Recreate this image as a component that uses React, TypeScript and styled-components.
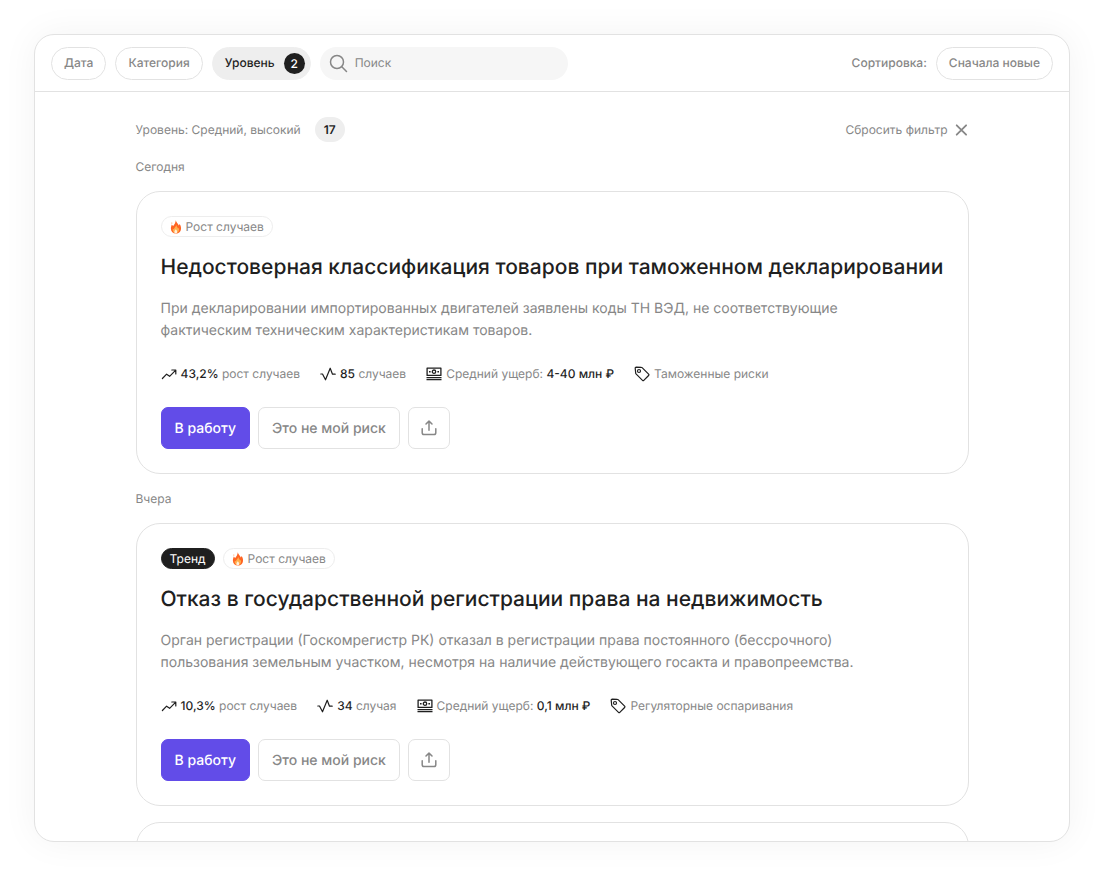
import React from "react";
import styled, { createGlobalStyle, css } from "styled-components";

const color = {
  ink: "#1f1f1f",
  muted: "#878787",
  line: "#e2e2e2",
  lineSoft: "#ededed",
  fill: "#eeeeee",
  field: "#f6f6f6",
  accent: "#624ce8",
};

const GlobalStyle = createGlobalStyle`
  *, *::before, *::after { box-sizing: border-box; }
  body { margin: 0; background: #fff; }
  body, button, input { font-family: Inter, "Liberation Sans", sans-serif; }
  body { text-rendering: geometricPrecision; }
  button, input { text-rendering: inherit; }
  h1, h2, p, ul { margin: 0; padding: 0; }
  svg { display: block; flex: none; }
`;

const Page = styled.div`
  height: 100vh;
  padding: 34px 34px 35px;
`;

const Panel = styled.div`
  display: flex;
  flex-direction: column;
  height: 100%;
  overflow: hidden;
  background: #fff;
  border: 1px solid ${color.line};
  border-radius: 20px;
  box-shadow: 0 0 36px rgba(0, 0, 0, 0.05);
`;

const Toolbar = styled.header`
  display: flex;
  flex: none;
  align-items: center;
  gap: 9px;
  height: 57px;
  padding: 0 16px;
  border-bottom: 1px solid ${color.line};
`;

const Pill = styled.button<{ $active?: boolean }>`
  display: flex;
  flex: none;
  align-items: center;
  gap: 9px;
  height: 33px;
  padding: 0 12px;
  border: 1px solid ${color.line};
  border-radius: 17px;
  background: #fff;
  color: ${color.muted};
  font-size: 12px;
  font-weight: 500;
  line-height: 16px;
  cursor: pointer;
  ${(p) =>
    p.$active &&
    css`
      padding: 0 5px 0 12px;
      border-color: ${color.fill};
      background: ${color.fill};
      color: ${color.ink};
    `}
`;

const PillCount = styled.span`
  width: 21px;
  height: 21px;
  border-radius: 50%;
  background: ${color.ink};
  color: #fff;
  line-height: 21px;
  text-align: center;
`;

const Search = styled.label`
  display: flex;
  flex: 0 1 248px;
  align-items: center;
  gap: 7px;
  height: 33px;
  padding: 0 10px 0 9px;
  border-radius: 17px;
  background: ${color.field};
  color: ${color.muted};
`;

const SearchInput = styled.input`
  flex: 1;
  min-width: 0;
  padding: 0;
  border: 0;
  outline: 0;
  background: transparent;
  color: ${color.ink};
  font-size: 12px;
  line-height: 16px;
  &::placeholder {
    color: ${color.muted};
    opacity: 1;
  }
`;

const Sorting = styled.div`
  display: flex;
  align-items: center;
  gap: 9px;
  margin-left: auto;
  color: ${color.muted};
  font-size: 12px;
  font-weight: 500;
  line-height: 16px;
`;

const Feed = styled.main`
  flex: 1;
  min-height: 0;
  padding: 25px 16px;
  overflow-y: auto;
  scrollbar-width: none;
`;

const Column = styled.div`
  max-width: 833px;
  margin: 0 auto;
`;

const FilterBar = styled.div`
  display: flex;
  align-items: center;
  gap: 14px;
  height: 25px;
  color: ${color.muted};
  font-size: 12px;
`;

const Total = styled.span`
  padding: 0 9px;
  border-radius: 13px;
  background: ${color.fill};
  color: ${color.ink};
  font-weight: 600;
  line-height: 25px;
`;

const Reset = styled.button`
  display: flex;
  align-items: center;
  gap: 7px;
  margin-left: auto;
  padding: 0;
  border: 0;
  background: none;
  color: ${color.muted};
  font-size: 12px;
  cursor: pointer;
`;

const DayLabel = styled.h2`
  padding: 16px 0 15px;
  color: ${color.muted};
  font-size: 12px;
  font-weight: 400;
  line-height: 18px;
`;

const Card = styled.article`
  min-height: 282px;
  padding: 24px;
  border: 1px solid ${color.line};
  border-radius: 24px;
  background: #fff;
  & + & {
    margin-top: 16px;
  }
`;

const Tags = styled.div`
  display: flex;
  gap: 8px;
`;

const Tag = styled.span<{ $dark?: boolean }>`
  display: flex;
  align-items: center;
  gap: 4px;
  height: 21px;
  padding: 0 8px;
  border: 1px solid ${(p) => (p.$dark ? color.ink : color.lineSoft)};
  border-radius: 11px;
  background: ${(p) => (p.$dark ? color.ink : "#fff")};
  color: ${(p) => (p.$dark ? "#fff" : color.muted)};
  font-size: 12px;
`;

const Title = styled.h1`
  margin-top: 17px;
  color: ${color.ink};
  font-size: 21px;
  font-weight: 500;
  line-height: 28px;
`;

const Description = styled.p`
  max-width: 740px;
  margin-top: 16px;
  color: ${color.muted};
  font-size: 14px;
  line-height: 22px;
`;

const Metrics = styled.ul`
  display: flex;
  flex-wrap: wrap;
  gap: 8px 20px;
  margin-top: 23px;
  list-style: none;
`;

const Metric = styled.li`
  display: flex;
  align-items: center;
  gap: 4px;
  color: ${color.muted};
  font-size: 12px;
  line-height: 18px;
  svg {
    color: ${color.ink};
  }
  strong {
    color: ${color.ink};
    font-weight: 500;
  }
`;

const Actions = styled.div`
  display: flex;
  gap: 8px;
  margin-top: 24px;
`;

const Action = styled.button<{ $primary?: boolean; $icon?: boolean }>`
  display: flex;
  align-items: center;
  justify-content: center;
  width: ${(p) => (p.$icon ? "42px" : "auto")};
  height: 42px;
  padding: 0 ${(p) => (p.$icon ? "0" : "13px")};
  border: 1px solid ${(p) => (p.$primary ? color.accent : color.line)};
  border-radius: 7px;
  background: ${(p) => (p.$primary ? color.accent : "#fff")};
  color: ${(p) => (p.$primary ? "#fff" : color.muted)};
  font-size: 14px;
  font-weight: 500;
  cursor: pointer;
`;

const SearchIcon = () => (
  <svg width="19" height="19" viewBox="0 0 19 19" fill="none" stroke="currentColor" strokeWidth="1.5" strokeLinecap="round" aria-hidden="true">
    <circle cx="8" cy="8" r="6.5" />
    <path d="m12.8 12.8 4.7 4.7" />
  </svg>
);

const CloseIcon = () => (
  <svg width="14" height="14" viewBox="0 0 14 14" fill="none" stroke="currentColor" strokeWidth="1.8" strokeLinecap="round" aria-hidden="true">
    <path d="m1.700 2.300 9.400 9.400M11.100 2.300l-9.400 9.400" />
  </svg>
);

const FlameIcon = () => (
  <svg width="12" height="14" viewBox="0 0 12 14" aria-hidden="true">
    <path fill="#ff6422" d="M5.800.3c.4 2.200 2.400 3.200 3 5.300.4-.4.6-.9.700-1.500 1.200 1.400 1.600 2.900 1.500 4.600-.1 2.700-2.100 4.800-5 4.800-3 0-5-2-5.100-4.800C.8 7 1.500 6 1.700 4.600c.7.4 1.100.9 1.300 1.600C4.200 4.800 5.600 3 5.800.3Z" />
    <path fill="#ffae4d" d="M6.300 5c.2 1.600 1.500 2.200 1.700 3.700.4-.2.7-.6.9-1 .6 2.400-.3 5.200-2.900 5.300-2.400 0-3.800-2.100-3.100-4.500.3.400.6.700 1 .8.2-1.800 2-2.300 2.400-4.300Z" />
    <path fill="#fff0dc" d="M5.900 9c.2 1 1.300 1.500 1.300 2.700 0 .9-.6 1.600-1.400 1.600s-1.400-.7-1.400-1.600c0-1.200 1.200-1.700 1.500-2.700Z" />
    <circle cx="1.800" cy="3" r=".6" fill="#ff9a5c" />
  </svg>
);

const GrowthIcon = () => (
  <svg width="16" height="16" viewBox="0 0 16 16" fill="none" stroke="currentColor" strokeWidth="1.200" strokeLinecap="round" strokeLinejoin="round" aria-hidden="true">
    <path d="M1.400 12.500 5.600 8.200 8.600 10.300 14.500 4.400M10.800 4h4v4" />
  </svg>
);

const PulseIcon = () => (
  <svg width="16" height="16" viewBox="0 0 16 16" fill="none" stroke="currentColor" strokeWidth="1.200" strokeLinecap="round" strokeLinejoin="round" aria-hidden="true">
    <path d="M.8 8h1.700l3 5.800L10.200 2.200 12.500 8.200h2.700" />
  </svg>
);

const MoneyIcon = () => (
  <svg width="16" height="16" viewBox="0 0 16 16" fill="none" stroke="currentColor" aria-hidden="true">
    <path strokeWidth="1.300" strokeLinejoin="round" d="M1.100 2.100h13.800v7.300H1.100z" />
    <circle cx="8" cy="5.700" r="1.700" strokeWidth="1.300" />
    <path strokeWidth="1.500" d="M3 5.700h1.600M11.400 5.700H13" />
    <path strokeWidth="1.300" d="M.5 11.600h15M.5 13.700h15" />
  </svg>
);

const TagIcon = () => (
  <svg width="16" height="16" viewBox="0 0 16 16" fill="none" stroke="currentColor" strokeWidth="1.200" strokeLinejoin="round" aria-hidden="true">
    <path d="M1.200 2.100c0-.5.4-.9.900-.9l5.300.2c.3 0 .5.1.7.3l6.500 6.500c.4.400.4.900 0 1.300l-4.800 4.900c-.4.400-.9.400-1.300 0L2 7.900c-.2-.2-.3-.4-.3-.7Z" />
    <circle cx="5" cy="5" r="1.500" />
  </svg>
);

const ShareIcon = () => (
  <svg width="16" height="16" viewBox="0 0 16 16" fill="none" stroke="currentColor" strokeWidth="1.500" strokeLinecap="round" strokeLinejoin="round" aria-hidden="true">
    <path d="M1.200 8.700v4.100c0 1.100.7 1.800 1.800 1.800h10c1.100 0 1.800-.7 1.800-1.800V8.700M8 10.200V1.200M5 4l3-2.900L11 4" />
  </svg>
);

interface Risk {
  day: string;
  trend?: boolean;
  title: string;
  description: string;
  growth: string;
  cases: string;
  casesWord: string;
  damage: string;
  category: string;
}

const risks: Risk[] = [
  {
    day: "Сегодня",
    title: "Недостоверная классификация товаров при таможенном декларировании",
    description:
      "При декларировании импортированных двигателей заявлены коды ТН ВЭД, не соответствующие фактическим техническим характеристикам товаров.",
    growth: "43,2%",
    cases: "85",
    casesWord: "случаев",
    damage: "4-40 млн ₽",
    category: "Таможенные риски",
  },
  {
    day: "Вчера",
    trend: true,
    title: "Отказ в государственной регистрации права на недвижимость",
    description:
      "Орган регистрации (Госкомрегистр РК) отказал в регистрации права постоянного (бессрочного) пользования земельным участком, несмотря на наличие действующего госакта и правопреемства.",
    growth: "10,3%",
    cases: "34",
    casesWord: "случая",
    damage: "0,1 млн ₽",
    category: "Регуляторные оспаривания",
  },
];

const RiskCard = ({ risk }: { risk: Risk }) => (
  <Card>
    <Tags>
      {risk.trend && <Tag $dark>Тренд</Tag>}
      <Tag>
        <FlameIcon />
        Рост случаев
      </Tag>
    </Tags>
    <Title>{risk.title}</Title>
    <Description>{risk.description}</Description>
    <Metrics>
      <Metric>
        <GrowthIcon />
        <span>
          <strong>{risk.growth}</strong> рост случаев
        </span>
      </Metric>
      <Metric>
        <PulseIcon />
        <span>
          <strong>{risk.cases}</strong> {risk.casesWord}
        </span>
      </Metric>
      <Metric>
        <MoneyIcon />
        <span>
          Средний ущерб: <strong>{risk.damage}</strong>
        </span>
      </Metric>
      <Metric>
        <TagIcon />
        <span>{risk.category}</span>
      </Metric>
    </Metrics>
    <Actions>
      <Action type="button" $primary>
        В работу
      </Action>
      <Action type="button">Это не мой риск</Action>
      <Action type="button" $icon aria-label="Поделиться">
        <ShareIcon />
      </Action>
    </Actions>
  </Card>
);

export default function App() {
  return (
    <Page>
      <GlobalStyle />
      <Panel>
        <Toolbar>
          <Pill type="button">Дата</Pill>
          <Pill type="button">Категория</Pill>
          <Pill type="button" $active>
            Уровень <PillCount>2</PillCount>
          </Pill>
          <Search>
            <SearchIcon />
            <SearchInput type="text" placeholder="Поиск" aria-label="Поиск" />
          </Search>
          <Sorting>
            <span>Сортировка:</span>
            <Pill type="button">Сначала новые</Pill>
          </Sorting>
        </Toolbar>
        <Feed>
          <Column>
            <FilterBar>
              <span>Уровень: Средний, высокий</span>
              <Total>17</Total>
              <Reset type="button">
                Сбросить фильтр
                <CloseIcon />
              </Reset>
            </FilterBar>
            {risks.map((risk, i) => (
              <React.Fragment key={risk.day}>
                <DayLabel>{risk.day}</DayLabel>
                <RiskCard risk={risk} />
                {i === risks.length - 1 && <Card />}
              </React.Fragment>
            ))}
          </Column>
        </Feed>
      </Panel>
    </Page>
  );
}
